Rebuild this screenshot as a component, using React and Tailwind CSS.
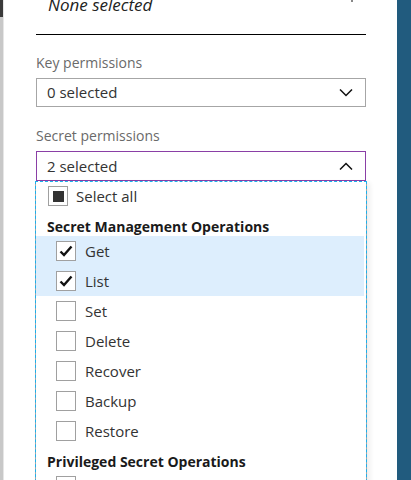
const FONT = { fontFamily: '"Segoe UI", "Open Sans", "Noto Sans", sans-serif' }

const SECRET_OPS = [
  { label: 'Get', checked: true },
  { label: 'List', checked: true },
  { label: 'Set', checked: false },
  { label: 'Delete', checked: false },
  { label: 'Recover', checked: false },
  { label: 'Backup', checked: false },
  { label: 'Restore', checked: false },
]

function Chevron({ up }) {
  return (
    <svg width="14" height="8" viewBox="0 0 14 8" fill="none" stroke="#111" strokeWidth="1.5">
      {up ? <polyline points="1,7.5 7,1.5 13,7.5" /> : <polyline points="1,0.5 7,6.5 13,0.5" />}
    </svg>
  )
}

function Checkbox({ checked, partial }) {
  return (
    <div className="w-[20px] h-[20px] border border-[#a0a0a0] bg-white flex items-center justify-center flex-shrink-0">
      {partial && <div className="w-[11px] h-[11px] bg-[#333]" />}
      {checked && (
        <svg width="18" height="18" viewBox="0 0 18 18" fill="none" stroke="#111" strokeWidth="2.4">
          <polyline points="3.5,9.5 7,13 14.5,4.5" />
        </svg>
      )}
    </div>
  )
}

function SelectBox({ text, open }) {
  return (
    <div
      className={`border flex items-center justify-between pl-[10px] pr-[12px] text-[15px] text-[#333] ${
        open ? 'border-[#8a3fa6] h-[30px]' : 'border-[#a6a6a6] h-[29px]'
      }`}
    >
      <span>{text}</span>
      <Chevron up={open} />
    </div>
  )
}

export default function App() {
  return (
    <div className="w-[411px] h-[480px] overflow-hidden flex bg-white" style={FONT}>
      {/* left edge strip */}
      <div className="w-[4px] flex flex-shrink-0">
        <div className="w-[3px] flex flex-col">
          <div className="h-[17px] bg-[#3a3a3a]" />
          <div className="flex-1 bg-[#c8c8c8]" />
        </div>
        <div className="w-[1px] bg-[#e6e6e6]" />
      </div>

      {/* blade content */}
      <div className="flex-1 flex flex-col pl-[32px] pr-[31px]">
        <div className="h-[35px] flex flex-col border-b border-black relative flex-shrink-0">
          <div className="pl-[12px] -mt-[6px] text-[17px] italic text-[#222] leading-[22px]">None selected</div>
          <div className="absolute right-[13px] top-0 w-[2px] h-[2px] bg-[#888]" />
        </div>

        <div className="mt-[18px] text-[14px] leading-[20px] text-[#6a6a6a]">Key permissions</div>
        <div className="mt-[5px]">
          <SelectBox text="0 selected" />
        </div>

        <div className="mt-[19px] text-[14px] leading-[20px] text-[#6a6a6a]">Secret permissions</div>
        <div className="mt-[5px]">
          <SelectBox text="2 selected" open />
        </div>

        {/* open dropdown */}
        <div className="-mx-[1px] border border-t-0 border-[#a6a6a6] outline outline-1 outline-dashed outline-[#1cb0ec] -outline-offset-1 bg-white shadow-[3px_2px_5px_rgba(0,0,0,0.07)] text-[15px] text-[#333]">
          <div className="h-[30px] flex items-center pl-[12px] gap-[8px]">
            <Checkbox partial />
            <span>Select all</span>
          </div>
          <div className="pt-[7px] pl-[11px] text-[14px] leading-[18px] font-bold text-[#1a1a1a]">
            Secret Management Operations
          </div>
          {SECRET_OPS.map((op) => (
            <div
              key={op.label}
              className={`h-[30px] flex items-center pl-[20px] gap-[9px] mr-[2px] ${op.checked ? 'bg-[#ddeefd]' : ''}`}
            >
              <Checkbox checked={op.checked} />
              <span>{op.label}</span>
            </div>
          ))}
          <div className="pt-[7px] pl-[11px] text-[14px] leading-[18px] font-bold text-[#1a1a1a]">
            Privileged Secret Operations
          </div>
          <div className="h-[30px] flex items-center pl-[20px]">
            <Checkbox />
          </div>
        </div>
      </div>

      {/* right neighbouring blade */}
      <div className="w-[14px] bg-[#215b7e] flex-shrink-0" />
    </div>
  )
}
